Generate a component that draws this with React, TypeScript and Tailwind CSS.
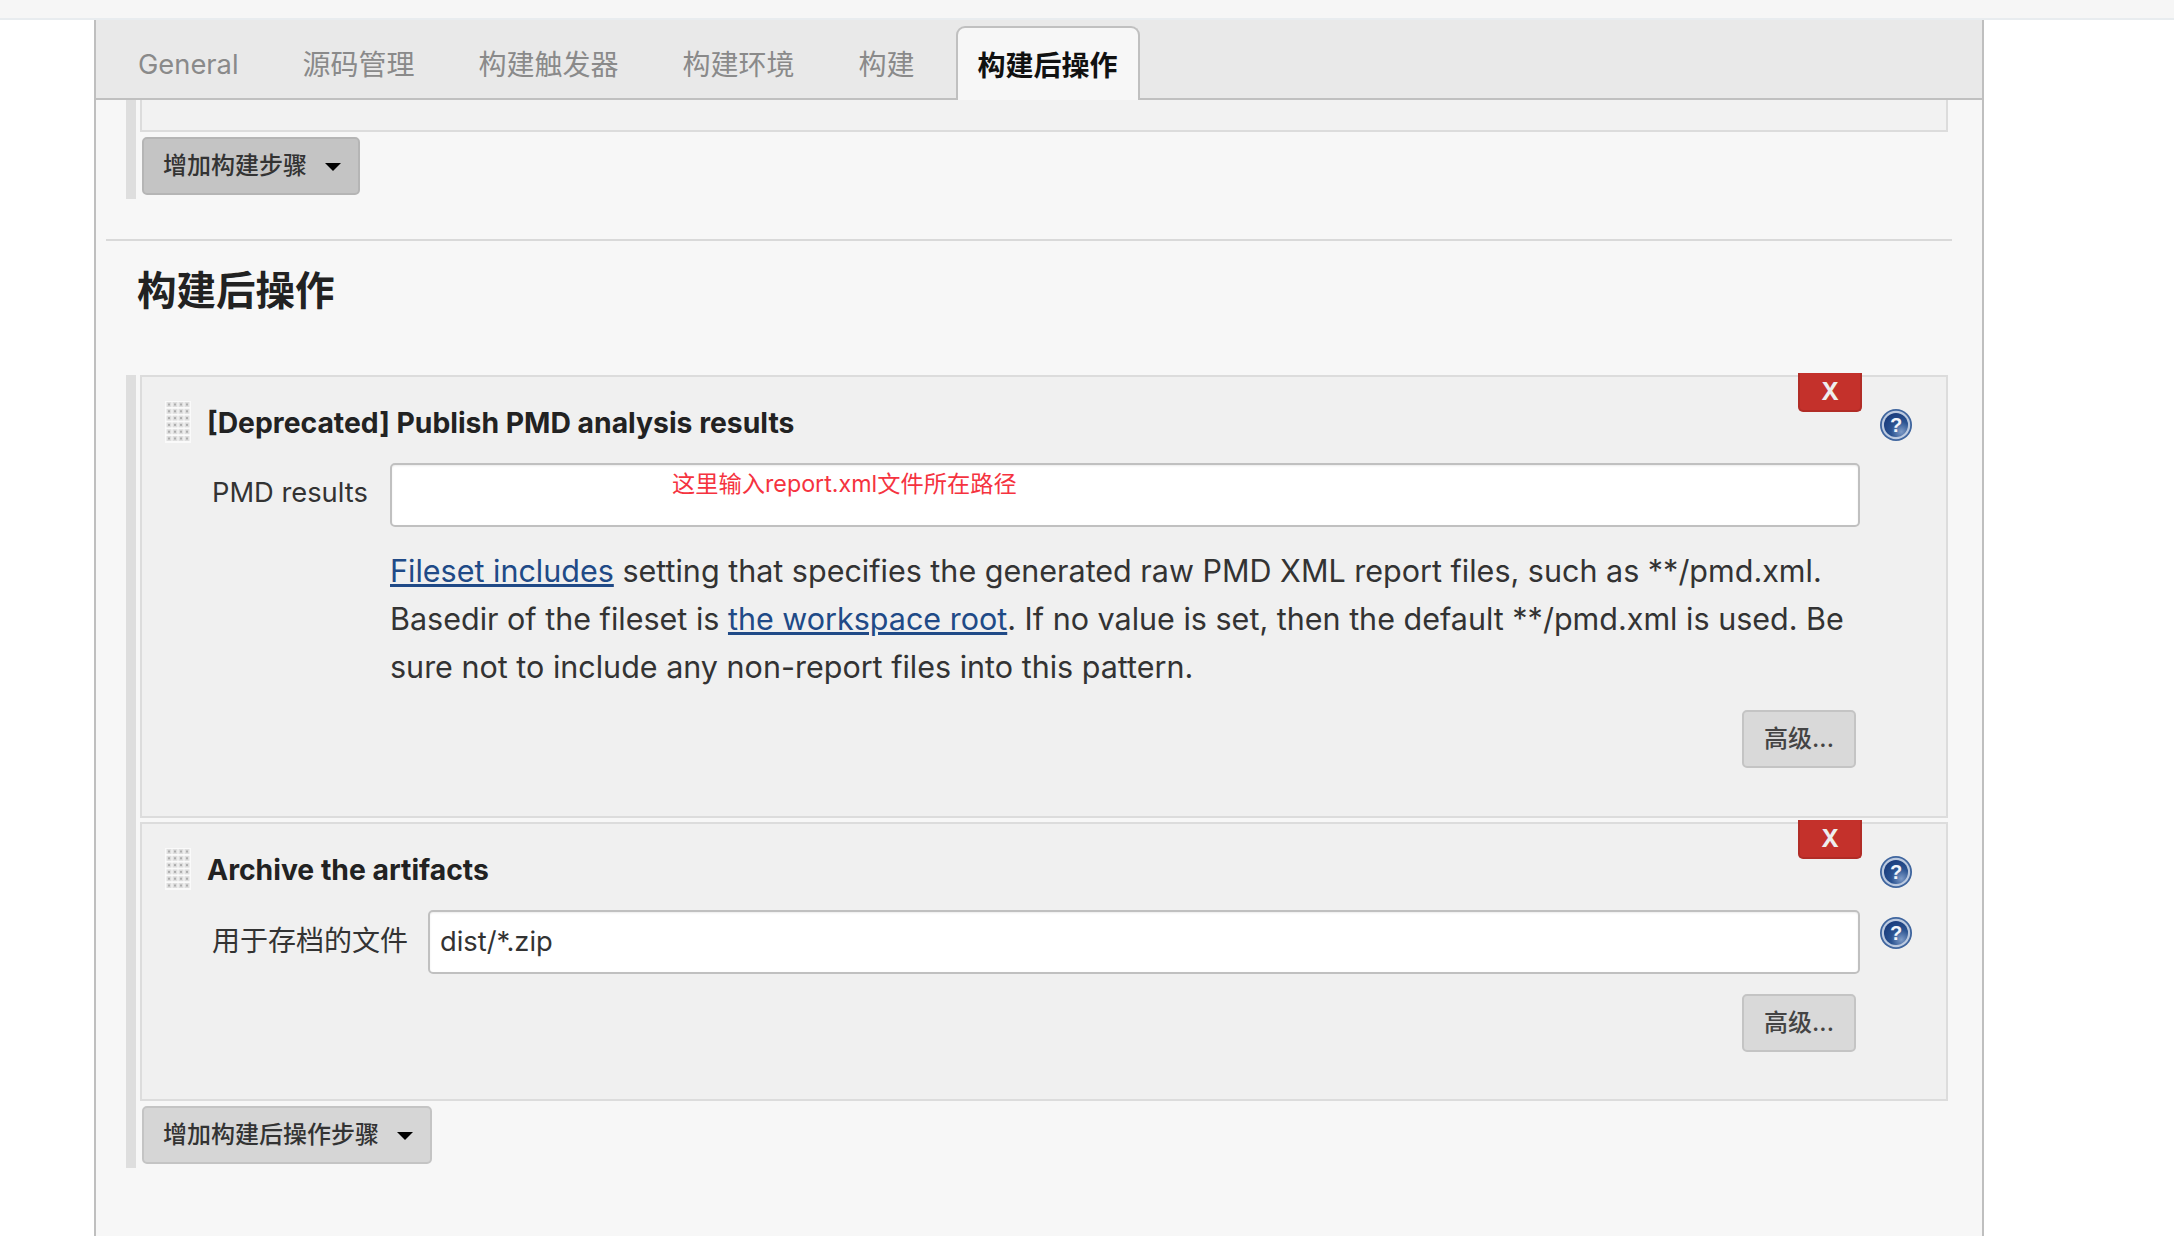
const cjk = "font-['Inter','Noto_Sans_CJK_SC',sans-serif]";

function HelpIcon() {
  return (
    <svg width="32" height="32" viewBox="0 0 32 32" className="shrink-0">
      <defs>
        <radialGradient id="helpFill" cx="72%" cy="78%" r="85%">
          <stop offset="0%" stopColor="#7d9ac6" />
          <stop offset="50%" stopColor="#2a5391" />
          <stop offset="100%" stopColor="#1a3c7c" />
        </radialGradient>
      </defs>
      <circle cx="16" cy="16" r="16" fill="#3f659e" />
      <circle cx="16" cy="16" r="14.2" fill="#bccae0" />
      <circle cx="16" cy="16" r="12" fill="url(#helpFill)" />
      <text x="16" y="23" textAnchor="middle" fontSize="20" fontWeight="700" fill="#f2f5fa" fontFamily="Liberation Sans">?</text>
    </svg>
  );
}

function Grip() {
  const dots = [];
  for (let r = 0; r < 6; r++) {
    for (let c = 0; c < 4; c++) {
      dots.push(<rect key={`a${r}-${c}`} x={1.5 + c * 6} y={1 + r * 6.8} width="5" height="5" fill="#dedede" />);
      dots.push(<rect key={`b${r}-${c}`} x={3 + c * 6} y={2.5 + r * 6.8} width="2" height="2" fill="#adadad" />);
    }
  }
  return (
    <svg width="26" height="42" viewBox="0 0 26 42" className="ml-[-1px] shrink-0 bg-[#fafafa]">
      {dots}
    </svg>
  );
}

function DeleteButton() {
  return (
    <div className="absolute right-[84px] top-[-4px] flex h-[39px] w-[64px] items-center justify-center rounded-b-[5px] border-2 border-t-0 border-[#b12c26] bg-[#c4312b] text-[24px] font-bold text-[#eeeeee]">
      X
    </div>
  );
}

function AdvancedButton() {
  return (
    <div className="ml-auto mr-[90px] flex h-[58px] w-[114px] items-center justify-center rounded-[5px] border-2 border-[#c4c4c4] bg-[#d9d9d9] text-[24px] font-medium text-[#444444]">
      高级...
    </div>
  );
}

function AddButton({ label, width, dark }: { label: string; width: string; dark?: boolean }) {
  return (
    <div
      className={`ml-[2px] flex h-[58px] items-center justify-between rounded-[5px] border-2 pl-[19px] pr-[17px] text-[24px] font-medium text-[#333333] ${width} ${
        dark ? "border-[#b5b5b5] bg-[#c4c4c4]" : "border-[#c4c4c4] bg-[#d6d6d6]"
      }`}
    >
      <span>{label}</span>
      <span className="mt-[2px] h-0 w-0 border-x-[8px] border-t-[8px] border-x-transparent border-t-black" />
    </div>
  );
}

function Tab({ label, active, latin }: { label: string; active?: boolean; latin?: boolean }) {
  if (active) {
    return (
      <div className="mb-[-2px] ml-[-23px] flex h-[74px] w-[184px] items-center justify-center self-end rounded-t-[9px] border-2 border-b-0 border-[#c0c0c0] bg-[#f7f7f7] pt-[4px] text-[28px] font-bold text-[#111111]">
        {label}
      </div>
    );
  }
  return <div className={`pt-[12px] text-[#8a8a8a] ${latin ? "text-[27.3px]" : "text-[28px]"}`}>{label}</div>;
}

export default function App() {
  return (
    <div className={`flex h-[1236px] flex-col overflow-hidden bg-white ${cjk}`}>
      <div className="h-[20px] shrink-0 border-b-2 border-[#e8ecef] bg-[#f6f6f6]" />
      <div className="ml-[94px] mr-[190px] flex-1 border-x-2 border-[#bfbfbf] bg-[#f7f7f7]">
        <div className="flex h-[80px] items-center gap-[64px] border-b-2 border-[#c0c0c0] bg-[#e9e9e9] pl-[42px]">
          <Tab label="General" latin />
          <Tab label="源码管理" />
          <Tab label="构建触发器" />
          <Tab label="构建环境" />
          <Tab label="构建" />
          <Tab label="构建后操作" active />
        </div>

        <div className="ml-[30px] mr-[34px] border-l-[10px] border-[#dedede] pb-[4px] pl-[4px]">
          <div className="h-[32px] border-2 border-t-0 border-[#dcdcdc] bg-[#f2f2f2]" />
          <div className="mt-[5px]">
            <AddButton label="增加构建步骤" width="w-[218px]" dark />
          </div>
        </div>

        <div className="ml-[10px] mr-[30px] mt-[40px] h-[2px] bg-[#d9d9d9]" />
        <h2 className="ml-[41px] mt-[22px] text-[39.5px] font-bold leading-[56px] text-[#222222]">构建后操作</h2>

        <div className="ml-[30px] mr-[34px] mt-[56px] border-l-[10px] border-[#dedede] pb-[4px] pl-[4px]">
          <div className="relative border-2 border-[#dcdcdc] bg-[#f0f0f0] pb-[48px] pt-[24px]">
            <DeleteButton />
            <div className="flex items-start pl-[24px] pr-[34px]">
              <Grip />
              <div className="ml-[16px] mt-[3px] flex-1 text-[28.3px] font-bold leading-[38px] text-[#222222]">[Deprecated] Publish PMD analysis results</div>
              <div className="mt-[8px] h-[34px]">
                <HelpIcon />
              </div>
            </div>
            <div className="mt-[20px] flex items-center pl-[70px] pr-[86px]">
              <div className="mb-[3px] w-[178px] text-[27.3px] text-[#333333]">PMD results</div>
              <div className="relative h-[64px] flex-1 rounded-[5px] border-2 border-[#c0c0c0] bg-white shadow-[inset_0_1px_2px_rgba(0,0,0,0.08)]">
                <span className="absolute left-[280px] top-[2px] text-[23.25px] text-[#f5333f]">这里输入report.xml文件所在路径</span>
              </div>
            </div>
            <p className="ml-[248px] mr-[85px] mt-[20px] text-[30.5px] leading-[48px] text-[#333333]">
              <a className="text-[#204a87] underline">Fileset includes</a> setting that specifies the generated raw PMD XML report files, such as **/pmd.xml. Basedir of the fileset is{" "}
              <a className="text-[#204a87] underline">the workspace root</a>. If no value is set, then the default **/pmd.xml is used. Be sure not to include any non-report files into this pattern.
            </p>
            <div className="mt-[19px] flex">
              <AdvancedButton />
            </div>
          </div>

          <div className="relative mt-[4px] border-2 border-[#dcdcdc] bg-[#f0f0f0] pb-[47px] pt-[24px]">
            <DeleteButton />
            <div className="flex items-start pl-[24px] pr-[34px]">
              <Grip />
              <div className="ml-[16px] mt-[3px] flex-1 text-[28.3px] font-bold leading-[38px] text-[#222222]">Archive the artifacts</div>
              <div className="mt-[8px] h-[34px]">
                <HelpIcon />
              </div>
            </div>
            <div className="mt-[20px] flex items-start pl-[70px] pr-[34px]">
              <div className="mt-[10px] w-[216px] text-[28px] text-[#333333]">用于存档的文件</div>
              <div className="flex h-[64px] flex-1 items-center rounded-[5px] border-2 border-[#c0c0c0] bg-white pl-[10px] text-[27.3px] text-[#333333] shadow-[inset_0_1px_2px_rgba(0,0,0,0.08)]">dist/*.zip</div>
              <div className="ml-[20px] mt-[7px]">
                <HelpIcon />
              </div>
            </div>
            <div className="mt-[20px] flex">
              <AdvancedButton />
            </div>
          </div>

          <div className="mt-[5px]">
            <AddButton label="增加构建后操作步骤" width="w-[290px]" />
          </div>
        </div>
      </div>
    </div>
  );
}
